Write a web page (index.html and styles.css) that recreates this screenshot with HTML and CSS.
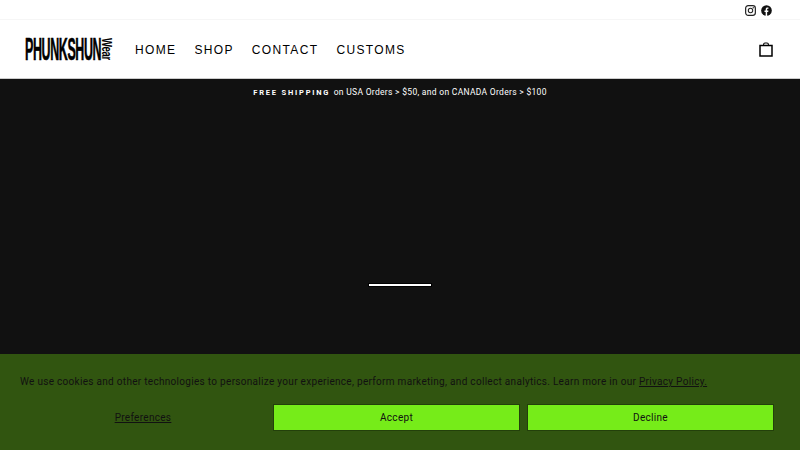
FILE: index.html
```html
<!DOCTYPE html>
<html lang="en">
<head>
    <meta charset="UTF-8">
    <meta name="viewport" content="width=device-width, initial-scale=1.0">
    <title>Phunkshun Wear</title>
    <link rel="stylesheet" href="styles.css">
</head>
<body>
    <div class="toolbar">
        <a class="social" href="#" aria-label="Instagram">
            <svg viewBox="0 0 12 12" width="11" height="11">
                <rect x="0.7" y="0.7" width="10.6" height="10.6" rx="2.8" fill="none" stroke="#222" stroke-width="1.3"/>
                <circle cx="6" cy="6" r="2.4" fill="none" stroke="#222" stroke-width="1.2"/>
                <circle cx="9" cy="3" r="0.7" fill="#222"/>
            </svg>
        </a>
        <a class="social" href="#" aria-label="Facebook">
            <svg viewBox="0 0 12 12" width="11" height="11">
                <circle cx="6" cy="6" r="5.8" fill="#111"/>
                <path d="M5.1 12V7.6H3.8V6h1.3V4.8c0-1.4.8-2.1 2-2.1.5 0 1 .1 1 .1v1.3h-.6c-.7 0-.8.4-.8.8V6h1.4l-.2 1.6H6.700V12z" fill="#fff"/>
            </svg>
        </a>
    </div>
    <header class="header">
        <a class="logo" href="#">
            <span class="logo-name">PHUNKSHUN</span>
            <span class="logo-wear">Wear</span>
        </a>
        <nav class="nav">
            <a href="#">HOME</a>
            <a href="#">SHOP</a>
            <a href="#">CONTACT</a>
            <a href="#">CUSTOMS</a>
        </nav>
        <a class="cart" href="#" aria-label="Cart">
            <svg viewBox="0 0 14 15" width="14" height="15">
                <path d="M1 3.400H13V14H1Z" fill="none" stroke="#000" stroke-width="1.500"/>
                <path d="M4.600 3.400V2.400C4.600 1.400 5.200 1 6 1H8C8.800 1 9.400 1.400 9.400 2.400V3.400" fill="none" stroke="#000" stroke-width="1.100"/>
            </svg>
        </a>
    </header>
    <div class="announcement">
        <strong>FREE SHIPPING</strong> on USA Orders &gt; $50, and on CANADA Orders &gt; $100
    </div>
    <main class="hero">
        <div class="loader"></div>
    </main>
    <section class="cookies">
        <p class="cookies-text">We use cookies and other technologies to personalize your experience, perform marketing, and collect analytics. Learn more in our <a href="#">Privacy Policy.</a></p>
        <div class="cookies-actions">
            <a class="prefs" href="#">Preferences</a>
            <button type="button">Accept</button>
            <button type="button">Decline</button>
        </div>
    </section>
</body>
</html>
```

FILE: styles.css
```css
html, body {
    height: 100%;
}
body {
    margin: 0;
    height: 450px;
    overflow: hidden;
    background: #111;
    font-family: 'Liberation Sans', Arial, sans-serif;
}
a {
    color: inherit;
    text-decoration: none;
}

.toolbar {
    display: flex;
    justify-content: flex-end;
    align-items: center;
    gap: 5px;
    height: 18px;
    padding: 1px 28px 0 0;
    background: #fff;
    border-bottom: 1px solid #f6f6f6;
}
.social {
    display: flex;
}

.header {
    display: flex;
    align-items: center;
    height: 58px;
    padding: 0 27px 0 25px;
    background: #fff;
    border-bottom: 1px solid #ccc;
    color: #000;
}
.logo {
    display: flex;
    align-items: center;
    width: 88px;
    height: 24px;
}
.logo-name {
    flex: none;
    width: 76px;
    font-size: 32px;
    font-weight: bold;
    line-height: 24px;
    letter-spacing: -1px;
    transform: scaleX(0.39);
    transform-origin: left center;
    white-space: nowrap;
    -webkit-text-stroke: 0.6px #000;
}
.logo-wear {
    flex: none;
    writing-mode: vertical-rl;
    font-size: 14px;
    font-weight: bold;
    line-height: 11px;
    letter-spacing: -0.5px;
    transform: scaleY(0.68);
}
.nav {
    display: flex;
    gap: 18px;
    margin: 1px 0 0 22px;
    font-size: 12px;
    letter-spacing: 1.35px;
}
.cart {
    display: flex;
    margin-left: auto;
}

.announcement {
    height: 26px;
    box-sizing: border-box;
    padding-top: 7px;
    text-align: center;
    color: #fff;
    font-family: Roboto, 'Liberation Sans', sans-serif;
    font-size: 8.5px;
    line-height: 12px;
    letter-spacing: 0.3px;
}
.announcement strong {
    margin-right: 1px;
    font-size: 7.5px;
    letter-spacing: 1.8px;
}

.hero {
    display: flex;
    justify-content: center;
    align-items: center;
    height: 360px;
}
.loader {
    width: 62px;
    height: 2px;
    background: #fff;
    outline: 1px solid #000;
}

.cookies {
    position: fixed;
    left: 0;
    right: 0;
    bottom: 0;
    height: 96px;
    box-sizing: border-box;
    padding: 20px 27px 0 20px;
    background: #315510;
    color: #111;
    font-family: Roboto, 'Liberation Sans', sans-serif;
    font-size: 10px;
    letter-spacing: 0.3px;
}
.cookies-text {
    margin: 0;
    line-height: 16px;
}
.cookies-text a, .prefs {
    text-decoration: underline;
}
.cookies-actions {
    display: grid;
    grid-template-columns: 246px 247px 247px;
    gap: 7px;
    align-items: center;
    margin-top: 14px;
}
.prefs {
    text-align: center;
}
.cookies-actions button {
    height: 27px;
    padding: 0;
    border: 1px solid #23400b;
    background: #76ec19;
    color: #111;
    font: inherit;
    letter-spacing: inherit;
}
```
